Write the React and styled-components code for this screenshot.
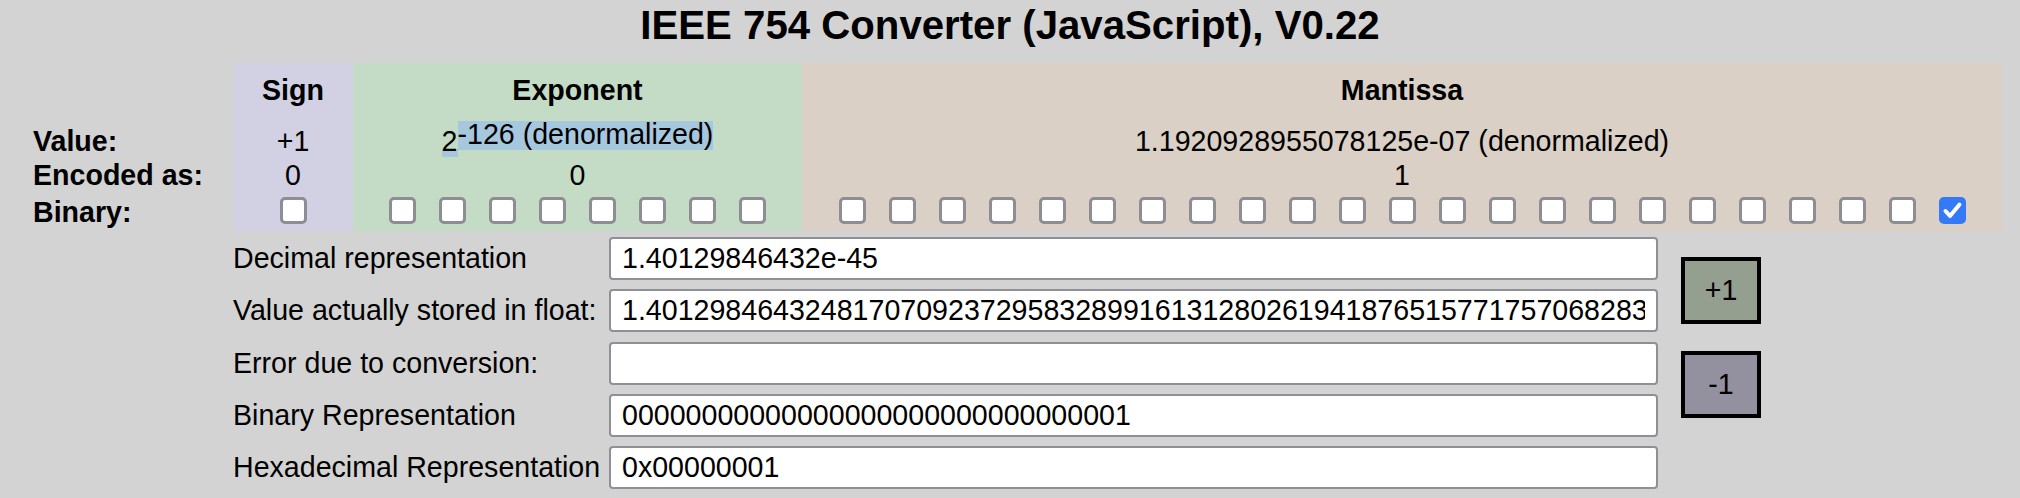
import React from 'react';
import styled, { createGlobalStyle } from 'styled-components';

const GlobalStyle = createGlobalStyle`
  html, body {
    margin: 0;
    padding: 0;
    background: #d3d3d3;
  }
  body {
    font-family: "Liberation Sans", Arial, Helvetica, sans-serif;
    font-size: 28.6px;
    color: #000;
  }
`;

const Page = styled.div`
  width: 2020px;
  height: 498px;
  overflow: hidden;
`;

const Title = styled.h1`
  margin: 0 0 15px;
  padding-top: 3px;
  font-size: 40.2px;
  line-height: 45px;
  font-weight: bold;
  text-align: center;
`;

const Fields = styled.div`
  display: flex;
  margin: 0 18px 0 33px;
`;

const Column = styled.div`
  width: ${p => p.$w}px;
  flex: none;
  background: ${p => p.$bg || 'transparent'};
  display: grid;
  grid-template-rows: 54px 41px 35px 38px;
  font-weight: ${p => (p.$label ? 'bold' : 'normal')};
`;

const Cell = styled.div`
  display: flex;
  align-items: ${p => (p.$bottom ? 'flex-end' : 'center')};
  justify-content: ${p => (p.$left ? 'flex-start' : 'center')};
  line-height: normal;
  white-space: nowrap;
`;

const Head = styled(Cell)`
  font-weight: bold;
`;

const Bits = styled.div`
  display: flex;
  justify-content: center;
  align-items: flex-start;
  gap: 23px;
  padding-top: 4px;
`;

const Box = styled.span`
  width: 27px;
  height: 27px;
  box-sizing: border-box;
  border-radius: 5px;
  border: ${p => (p.$on ? 'none' : '3.6px solid #8e8d95')};
  background: ${p => (p.$on ? '#3479f6' : '#fff')};
  display: flex;
  align-items: center;
  justify-content: center;
  flex: none;
`;

const Base = styled.span`
  display: inline-block;
  line-height: 32px;
  background: linear-gradient(transparent 76%, #a6c8df 76%);
`;

const Sup = styled.span`
  display: inline-block;
  line-height: 26px;
  padding-bottom: 3px;
  vertical-align: 7px;
  background: #a6c8df;
`;

const Form = styled.div`
  display: grid;
  grid-template-columns: 376px 1049px 80px;
  grid-template-rows: repeat(5, 43px);
  row-gap: 9.25px;
  margin: 6px 0 0 233px;
`;

const Label = styled.div`
  grid-column: 1;
  display: flex;
  align-items: center;
  white-space: nowrap;
`;

const Field = styled.input`
  grid-column: 2;
  box-sizing: border-box;
  width: 100%;
  height: 43px;
  margin: 0;
  padding: 0 11px;
  border: 2px solid #8f8f97;
  border-radius: 4px;
  background: #fff;
  font-family: inherit;
  font-size: 28.6px;
  color: #000;
  outline: none;
`;

const Buttons = styled.div`
  grid-column: 3;
  grid-row: 1 / span 5;
  margin-left: 23px;
  padding-top: 20px;
  display: flex;
  flex-direction: column;
  gap: 27px;
`;

const StepButton = styled.button`
  width: 80px;
  height: 67px;
  box-sizing: border-box;
  border: 4px solid #000;
  border-radius: 0;
  background: ${p => p.$bg};
  font-family: inherit;
  font-size: 28.6px;
  color: #000;
  padding: 0;
`;

function Checkbox({ on }) {
  return (
    <Box $on={on}>
      {on && (
        <svg width="27" height="27" viewBox="0 0 27 27">
          <path d="M6.5 14 L11 19 L20.5 7.5" fill="none" stroke="#fff" strokeWidth="4" strokeLinecap="round" strokeLinejoin="round" />
        </svg>
      )}
    </Box>
  );
}

const bits = '00000000000000000000000000000001'.split('').map(b => b === '1');

const rows = [
  ['Decimal representation', '1.40129846432e-45'],
  ['Value actually stored in float:', '1.40129846432481707092372958328991613128026194187651577175706828388979108268586060148663818836212158203125e-45'],
  ['Error due to conversion:', ''],
  ['Binary Representation', '00000000000000000000000000000001'],
  ['Hexadecimal Representation', '0x00000001'],
];

export default function App() {
  return (
    <Page>
      <GlobalStyle />
      <Title>IEEE 754 Converter (JavaScript), V0.22</Title>

      <Fields>
        <Column $w={200} $label>
          <Cell $left />
          <Cell $left $bottom>Value:</Cell>
          <Cell $left>Encoded as:</Cell>
          <Cell $left>Binary:</Cell>
        </Column>

        <Column $w={120} $bg="#d1d1e3">
          <Head>Sign</Head>
          <Cell $bottom>+1</Cell>
          <Cell>0</Cell>
          <Bits>
            <Checkbox on={bits[0]} />
          </Bits>
        </Column>

        <Column $w={449} $bg="#c4dcc5">
          <Head>Exponent</Head>
          <Cell $bottom>
            <span>
              <Base>2</Base>
              <Sup>-126 (denormalized)</Sup>
            </span>
          </Cell>
          <Cell>0</Cell>
          <Bits>
            {bits.slice(1, 9).map((b, i) => <Checkbox key={i} on={b} />)}
          </Bits>
        </Column>

        <Column $w={1200} $bg="#dad0c6">
          <Head>Mantissa</Head>
          <Cell $bottom>1.1920928955078125e-07 (denormalized)</Cell>
          <Cell>1</Cell>
          <Bits>
            {bits.slice(9).map((b, i) => <Checkbox key={i} on={b} />)}
          </Bits>
        </Column>
      </Fields>

      <Form>
        {rows.map(([label, value], i) => (
          <React.Fragment key={label}>
            <Label style={{ gridRow: i + 1 }}>{label}</Label>
            <Field style={{ gridRow: i + 1 }} value={value} readOnly />
          </React.Fragment>
        ))}
        <Buttons>
          <StepButton $bg="#949f90">+1</StepButton>
          <StepButton $bg="#93919f">-1</StepButton>
        </Buttons>
      </Form>
    </Page>
  );
}
